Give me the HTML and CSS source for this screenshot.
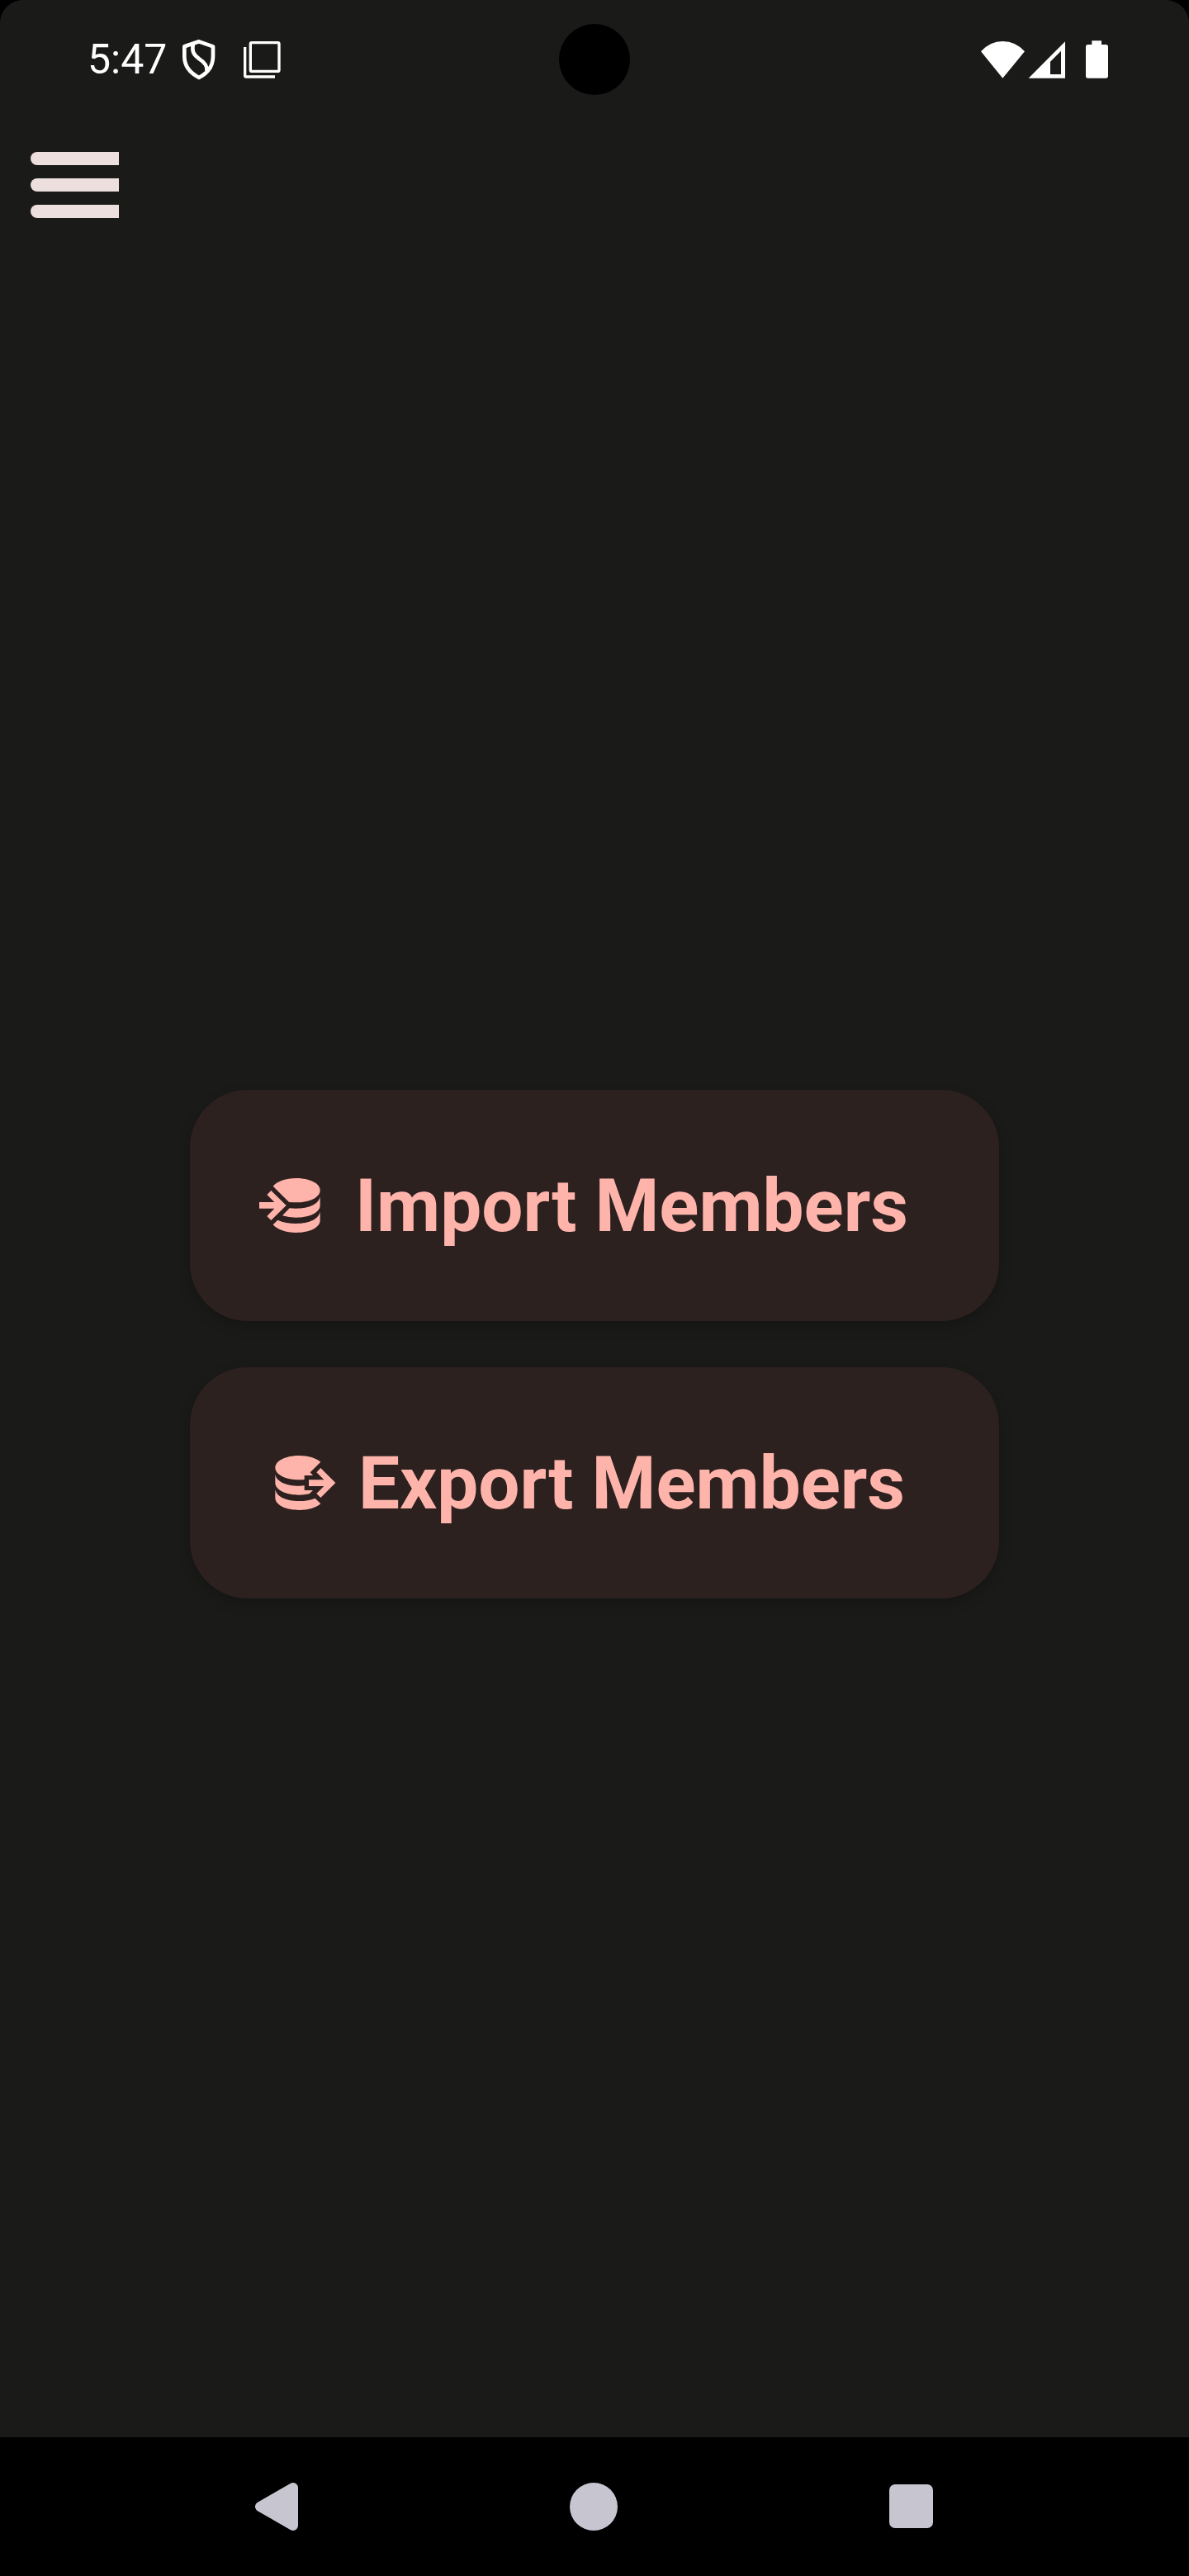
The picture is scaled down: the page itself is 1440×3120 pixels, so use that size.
FILE: index.html
```html
<!DOCTYPE html>
<html lang="en">
<head>
<meta charset="utf-8">
<meta name="viewport" content="width=device-width, initial-scale=1">
<title>Members</title>
<link rel="stylesheet" href="styles.css">
</head>
<body class="device">
<div class="screen">
  <div class="status-bar">
    <div class="status-group">
      <span class="clock">5:47</span>
      <svg class="icon-shield" viewBox="660 144 126 150" aria-hidden="true">
        <path d="M723 154 L774 172 V208 C774 246 754 269 723 285 C692 269 670 246 670 208 V172 Z M702 162 C696 190 704 203 724 217 C744 230 754 242 751 262" fill="none" stroke="#fff" stroke-width="14" stroke-linejoin="round"/>
      </svg>
      <svg class="icon-layers" viewBox="882 150 141 141" aria-hidden="true">
        <rect x="910" y="158" width="104" height="104" rx="5" fill="none" stroke="#fff" stroke-width="10"/>
        <path d="M890 174 V278 Q890 282 894 282 H999" fill="none" stroke="#fff" stroke-width="10"/>
      </svg>
    </div>
    <div class="camera"></div>
    <div class="status-group">
      <svg class="icon-wifi" viewBox="84 147 159 138" aria-hidden="true">
        <path d="M84 187 Q117 150 163 150 Q210 150 243 187 L163 284 Z" fill="#fff"/>
      </svg>
      <svg class="icon-signal" viewBox="255 147 138 138" aria-hidden="true">
        <path fill-rule="evenodd" d="M390 151 V284 H257 Z M375 185 L336 224 V270 H375 Z" fill="#fff"/>
      </svg>
      <svg class="icon-battery" viewBox="465 147 81 138" aria-hidden="true">
        <path d="M487 148 H522 V162 H538 Q546 162 546 170 V276 Q546 284 538 284 H473 Q465 284 465 276 V170 Q465 162 473 162 H487 Z" fill="#fff"/>
      </svg>
    </div>
  </div>

  <header class="app-bar">
    <button class="menu-button" type="button" aria-label="Open menu">
      <span class="menu-line"></span>
      <span class="menu-line"></span>
      <span class="menu-line"></span>
    </button>
  </header>

  <main class="actions">
    <button class="action" type="button">
      <svg class="action-icon" viewBox="51 6 288 288" aria-hidden="true">
        <path d="M119 80 C135 62 166 51 203 51 C252 51 290 70 290 95 C290 120 252 139 203 139 Q190 139 177 138 Z"/>
        <path d="M290 117 V150 C290 175 252 194 203 194 Q176 194 153 187 L179 160 Q190 161 203 161 C252 161 286 144 290 117 Z"/>
        <path d="M290 172 V205 C290 230 252 249 203 249 C166 249 135 238 119 220 L136 203 Q165 216 203 216 C252 216 286 199 290 172 Z"/>
        <path d="M69 138 H124 L97 111 L112 96 L167 150 L112 204 L97 189 L124 161 H69 Z"/>
      </svg>
      <span class="action-label">Import Members</span>
    </button>
    <button class="action" type="button">
      <svg class="action-icon" viewBox="0 24 288 288" aria-hidden="true">
        <path d="M229 92 L191 130 L201 141 H170 V156 Q161 157 151 157 C102 157 64 138 64 113 C64 88 102 69 151 69 C184 69 212 78 229 92 Z"/>
        <path d="M64 137 C68 162 102 179 151 179 Q161 179 170 178 V195 H201 L188 208 Q170 212 151 212 C102 212 64 193 64 168 Z"/>
        <path d="M64 191 C68 217 102 234 151 234 Q184 234 209 224 L229 244 C212 259 184 267 151 267 C102 267 64 248 64 223 Z"/>
        <path d="M186 157 H241 L214 130 L229 114 L283 168 L229 222 L214 207 L241 180 H186 Z"/>
      </svg>
      <span class="action-label">Export Members</span>
    </button>
  </main>
</div>

<nav class="nav-bar" aria-label="System navigation">
  <button class="nav-button" type="button" aria-label="Back">
    <svg class="nav-icon" viewBox="0 0 60 60" aria-hidden="true">
      <path class="nav-back" d="M49 7 V53 L9 30 Z"/>
    </svg>
  </button>
  <button class="nav-button" type="button" aria-label="Home">
    <svg class="nav-icon" viewBox="0 0 60 60" aria-hidden="true"><circle cx="29" cy="30" r="29"/></svg>
  </button>
  <button class="nav-button" type="button" aria-label="Recent apps">
    <svg class="nav-icon" viewBox="0 0 60 60" aria-hidden="true"><rect x="3" y="3" width="53" height="53" rx="7"/></svg>
  </button>
</nav>
</body>
</html>
```
FILE: styles.css
```css
* {
  box-sizing: border-box;
}

.device {
  display: flex;
  flex-direction: column;
  min-height: 100vh;
  margin: 0;
  background: #000;
  font-family: Roboto, "Liberation Sans", sans-serif;
}

button {
  padding: 0;
  border: 0;
  background: none;
  font: inherit;
  cursor: pointer;
}

svg {
  display: block;
  flex: none;
}

.screen {
  display: flex;
  flex: 1;
  flex-direction: column;
  border-radius: 28px 28px 0 0;
  background: #1a1a18;
}

.status-bar {
  position: relative;
  display: flex;
  align-items: center;
  justify-content: space-between;
  height: 144px;
  padding: 0 98px 0 106px;
  color: #fff;
}

.status-group {
  display: flex;
  align-items: center;
}

.clock {
  margin-right: 18px;
  font-size: 50px;
  line-height: 60px;
}

.icon-shield {
  width: 42px;
  height: 50px;
  margin-right: 32px;
}

.icon-layers {
  width: 47px;
  height: 47px;
}

.icon-wifi {
  width: 53px;
  height: 46px;
  margin-right: 4px;
}

.icon-signal {
  width: 46px;
  height: 46px;
  margin-right: 24px;
}

.icon-battery {
  width: 27px;
  height: 46px;
}

.camera {
  position: absolute;
  top: 29px;
  left: 50%;
  width: 86px;
  height: 86px;
  margin-left: -43px;
  border-radius: 50%;
  background: #000;
}

.app-bar {
  display: flex;
  align-items: center;
  height: 160px;
  padding: 0 37px;
}

.menu-button {
  display: flex;
  flex-direction: column;
  gap: 16px;
  width: 107px;
}

.menu-line {
  height: 16px;
  border-radius: 8px 0 0 8px;
  background: #eddfde;
}

.actions {
  display: flex;
  flex: 1;
  flex-direction: column;
  align-items: center;
  justify-content: center;
  gap: 56px;
}

.action {
  display: flex;
  align-items: center;
  justify-content: center;
  gap: 26px;
  width: 68%;
  height: 280px;
  padding-right: 32px;
  border-radius: 70px;
  background: #2c211f;
  box-shadow: 0 6px 16px rgba(0, 0, 0, 0.2);
  color: #ffb4ab;
  font-size: 89px;
  font-weight: 700;
  line-height: 104px;
}

.action-icon {
  width: 96px;
  height: 96px;
  fill: currentColor;
}

.action-label {
  padding-top: 2px;
}

.nav-bar {
  display: flex;
  align-items: center;
  justify-content: center;
  gap: 132px;
  height: 168px;
}

.nav-button {
  display: flex;
  justify-content: center;
  width: 252px;
}

.nav-icon {
  width: 60px;
  height: 60px;
  fill: #c7c5d0;
}

.nav-back {
  stroke: #c7c5d0;
  stroke-width: 12px;
  stroke-linejoin: round;
}
```
